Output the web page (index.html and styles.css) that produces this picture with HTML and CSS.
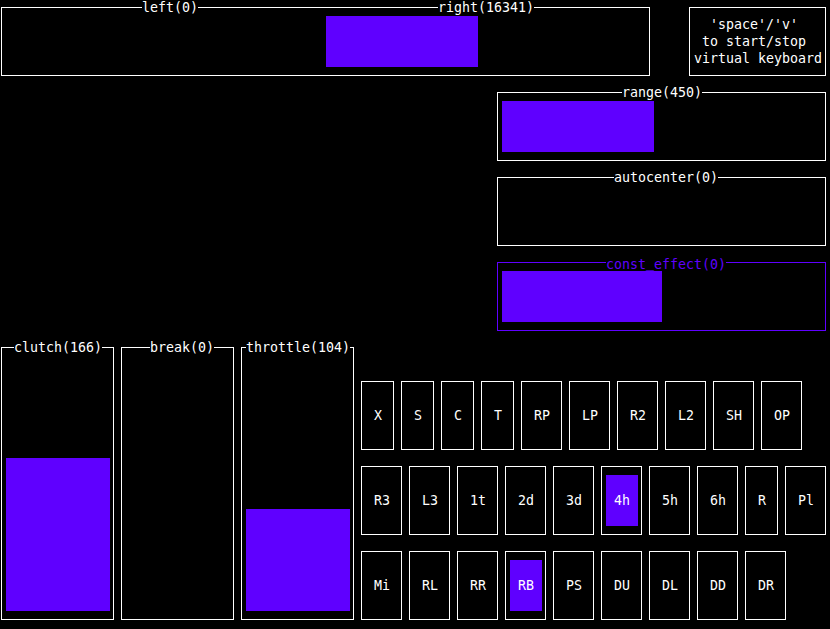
FILE: index.html
```html
<!DOCTYPE html>
<html lang="en">
<head>
    <meta charset="UTF-8">
    <meta name="viewport" content="width=device-width, initial-scale=1.0">
    <title>Wheel monitor</title>
    <link rel="stylesheet" href="styles.css">
</head>
<body>
<div class="term">
    <!-- steering + help -->
    <div class="top">
        <div class="panel steer">
            <div class="frame">
                <div class="titles">
                    <span class="title t-left">left(0)</span>
                    <span class="title t-right">right(16341)</span>
                </div>
                <div class="hbar bar-right" style="width: 152px"></div>
            </div>
        </div>
        <div class="panel help">
            <div class="frame">
<pre class="hint">  'space'/'v'
 to start/stop
virtual keyboard</pre>
            </div>
        </div>
    </div>

    <!-- force feedback settings -->
    <div class="mid">
        <div class="panel">
            <div class="frame">
                <div class="titles"><span class="title t-range">range(450)</span></div>
                <div class="hbar" style="width: 152px"></div>
            </div>
        </div>
        <div class="panel">
            <div class="frame">
                <div class="titles"><span class="title t-auto">autocenter(0)</span></div>
            </div>
        </div>
        <div class="panel active">
            <div class="frame">
                <div class="titles"><span class="title t-const">const<span class="us">_</span>effect(0)</span></div>
                <div class="hbar" style="width: 160px"></div>
            </div>
        </div>
    </div>

    <!-- pedals + buttons -->
    <div class="bottom">
        <div class="panel pedal">
            <div class="frame">
                <div class="titles"><span class="title t-clutch">clutch(166)</span></div>
                <div class="vbar" style="height: 153px"></div>
            </div>
        </div>
        <div class="panel pedal">
            <div class="frame">
                <div class="titles"><span class="title t-break">break(0)</span></div>
            </div>
        </div>
        <div class="panel pedal">
            <div class="frame">
                <div class="titles"><span class="title t-throttle">throttle(104)</span></div>
                <div class="vbar" style="height: 102px"></div>
            </div>
        </div>

        <div class="keys">
            <div class="key-row">
                <div class="key narrow"><div class="frame"><span class="cap">X</span></div></div>
                <div class="key narrow"><div class="frame"><span class="cap">S</span></div></div>
                <div class="key narrow"><div class="frame"><span class="cap">C</span></div></div>
                <div class="key narrow"><div class="frame"><span class="cap">T</span></div></div>
                <div class="key"><div class="frame"><span class="cap">RP</span></div></div>
                <div class="key"><div class="frame"><span class="cap">LP</span></div></div>
                <div class="key"><div class="frame"><span class="cap">R2</span></div></div>
                <div class="key"><div class="frame"><span class="cap">L2</span></div></div>
                <div class="key"><div class="frame"><span class="cap">SH</span></div></div>
                <div class="key"><div class="frame"><span class="cap">OP</span></div></div>
            </div>
            <div class="key-row">
                <div class="key"><div class="frame"><span class="cap">R3</span></div></div>
                <div class="key"><div class="frame"><span class="cap">L3</span></div></div>
                <div class="key"><div class="frame"><span class="cap">1t</span></div></div>
                <div class="key"><div class="frame"><span class="cap">2d</span></div></div>
                <div class="key"><div class="frame"><span class="cap">3d</span></div></div>
                <div class="key"><div class="frame"><span class="cap on">4h</span></div></div>
                <div class="key"><div class="frame"><span class="cap">5h</span></div></div>
                <div class="key"><div class="frame"><span class="cap">6h</span></div></div>
                <div class="key narrow"><div class="frame"><span class="cap">R</span></div></div>
                <div class="key"><div class="frame"><span class="cap">Pl</span></div></div>
            </div>
            <div class="key-row">
                <div class="key"><div class="frame"><span class="cap">Mi</span></div></div>
                <div class="key"><div class="frame"><span class="cap">RL</span></div></div>
                <div class="key"><div class="frame"><span class="cap">RR</span></div></div>
                <div class="key"><div class="frame"><span class="cap on">RB</span></div></div>
                <div class="key"><div class="frame"><span class="cap">PS</span></div></div>
                <div class="key"><div class="frame"><span class="cap">DU</span></div></div>
                <div class="key"><div class="frame"><span class="cap">DL</span></div></div>
                <div class="key"><div class="frame"><span class="cap">DD</span></div></div>
                <div class="key"><div class="frame"><span class="cap">DR</span></div></div>
            </div>
        </div>
    </div>
</div>
</body>
</html>
```

FILE: styles.css
```css
/* terminal grid: 8px x 17px cells */
body {
    margin: 0;
    background-color: #000;
    color: #fff;
    font-family: "DejaVu Sans Mono", monospace;
    font-size: 13.29px;
    line-height: 17px;
    overflow: hidden;
}
.term {
    width: 832px;
    margin: -1px 0 0 -2px;
}
.top {
    display: flex;
    height: 85px;
}
.panel {
    display: flex;
    height: 85px;
}
.steer {
    width: 656px;
}
.help {
    width: 144px;
    margin-left: 32px;
}
.mid {
    width: 336px;
    margin-left: 496px;
}
.bottom {
    display: flex;
    align-items: flex-start;
}

/* box lines sit in the middle of the edge cells */
.frame {
    flex: 1;
    min-width: 0;
    margin: 8px 4px 8px 3px;
    border: 1px solid #fff;
}
.titles {
    display: flex;
    height: 17px;
    margin-top: -9px;
}
.title {
    background-color: #000;
    white-space: pre;
}
/* keep the underscore inside its cell, above the bar */
.us {
    vertical-align: 2px;
}
.t-left { margin-left: 140px; }
.t-right { margin-left: 240px; }
.t-range { margin-left: 124px; }
.t-auto { margin-left: 116px; }
.t-const { margin-left: 108px; }
.t-clutch { margin-left: 12px; }
.t-break { margin-left: 28px; }
.t-throttle { margin-left: 4px; }

.active .frame {
    border-color: #5f00ff;
}
.active .title {
    color: #5f00ff;
}

.hbar {
    height: 51px;
    margin-left: 4px;
    background-color: #5f00ff;
}
.bar-right {
    margin-left: 324px;
}

.hint {
    margin: 8px 0 0 4px;
    font: inherit;
    line-height: 17px;
}

.pedal {
    width: 120px;
    height: 289px;
}
.pedal .frame {
    display: flex;
    flex-direction: column;
}
.vbar {
    width: 104px;
    margin: auto 0 8px 4px;
    background-color: #5f00ff;
}

/* virtual keyboard */
.keys {
    margin-top: 34px;
}
.key-row {
    display: flex;
}
.key {
    display: flex;
    width: 48px;
    height: 85px;
}
.key.narrow {
    width: 40px;
}
.key .frame {
    display: flex;
    padding: 8px 3px 8px 4px;
}
.cap {
    flex: 1;
    display: flex;
    align-items: center;
    justify-content: center;
}
.cap.on {
    background-color: #5f00ff;
}
```
